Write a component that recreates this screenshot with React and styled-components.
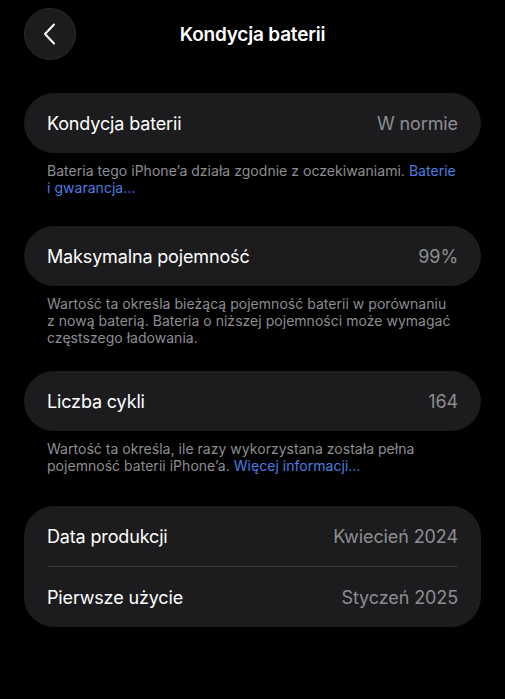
import React from "react";
import styled, { createGlobalStyle } from "styled-components";

const GlobalStyle = createGlobalStyle`
  html, body {
    margin: 0;
    padding: 0;
    background: #000;
  }
  body {
    font-family: Inter, "Noto Sans", "Liberation Sans", sans-serif;
    -webkit-font-smoothing: antialiased;
  }
`;

const Screen = styled.div`
  width: 505px;
  min-height: 699px;
  background: #000;
  color: #fff;
  box-sizing: border-box;
  padding: 8px 24px 0;
`;

const Header = styled.header`
  display: grid;
  grid-template-columns: 52px 1fr 52px;
  align-items: center;
  height: 52px;
  margin-bottom: 33px;
`;

const BackButton = styled.button`
  width: 52px;
  height: 52px;
  border-radius: 50%;
  background: #1c1c1e;
  border: 1px solid #2a2a2c;
  display: flex;
  align-items: center;
  justify-content: center;
  padding: 0;
  cursor: pointer;
`;

const Title = styled.h1`
  margin: 0;
  text-align: center;
  font-size: 19px;
  font-weight: 600;
  letter-spacing: -0.2px;
`;

const Section = styled.section`
  margin-bottom: ${(p) => p.$gap || 0}px;
`;

const Card = styled.div`
  background: #1c1c1e;
  border-radius: 30px;
  overflow: hidden;
`;

const Row = styled.div`
  display: flex;
  align-items: center;
  justify-content: space-between;
  height: 60px;
  padding: 0 23px;
  & + & {
    border-top: 1px solid #38383a;
    margin: 0 23px;
    padding: 0;
  }
`;

const Label = styled.span`
  font-size: 18px;
  color: #fff;
  letter-spacing: -0.15px;
`;

const Value = styled.span`
  font-size: 18px;
  color: #8d8d92;
  letter-spacing: -0.1px;
`;

const Footnote = styled.p`
  margin: 0;
  padding: 9px 23px 0;
  font-size: 14px;
  line-height: 17px;
  color: #8d8d92;
  letter-spacing: 0.03px;
`;

const Link = styled.a`
  color: #4a7ee0;
  text-decoration: none;
`;

const Chevron = () => (
  <svg width="14" height="22" viewBox="0 0 14 22" fill="none">
    <path
      d="M11 1.5 L2 11 L11 20.5"
      stroke="#fff"
      strokeWidth="2"
      strokeLinecap="round"
      strokeLinejoin="round"
    />
  </svg>
);

export default function App() {
  return (
    <>
      <GlobalStyle />
      <Screen>
        <Header>
          <BackButton aria-label="Wstecz">
            <Chevron />
          </BackButton>
          <Title>Kondycja baterii</Title>
          <span />
        </Header>

        <Section $gap={30}>
          <Card>
            <Row>
              <Label>Kondycja baterii</Label>
              <Value>W normie</Value>
            </Row>
          </Card>
          <Footnote>
            Bateria tego iPhone’a działa zgodnie z oczekiwaniami.{" "}
            <Link href="#">Baterie i gwarancja…</Link>
          </Footnote>
        </Section>

        <Section $gap={25}>
          <Card>
            <Row>
              <Label>Maksymalna pojemność</Label>
              <Value>99%</Value>
            </Row>
          </Card>
          <Footnote>
            Wartość ta określa bieżącą pojemność baterii w porównaniu z nową
            baterią. Bateria o niższej pojemności może wymagać częstszego
            ładowania.
          </Footnote>
        </Section>

        <Section $gap={32}>
          <Card>
            <Row>
              <Label>Liczba cykli</Label>
              <Value>164</Value>
            </Row>
          </Card>
          <Footnote>
            Wartość ta określa, ile razy wykorzystana została pełna pojemność
            baterii iPhone’a. <Link href="#">Więcej informacji…</Link>
          </Footnote>
        </Section>

        <Section>
          <Card>
            <Row>
              <Label>Data produkcji</Label>
              <Value>Kwiecień 2024</Value>
            </Row>
            <Row>
              <Label>Pierwsze użycie</Label>
              <Value>Styczeń 2025</Value>
            </Row>
          </Card>
        </Section>
      </Screen>
    </>
  );
}
